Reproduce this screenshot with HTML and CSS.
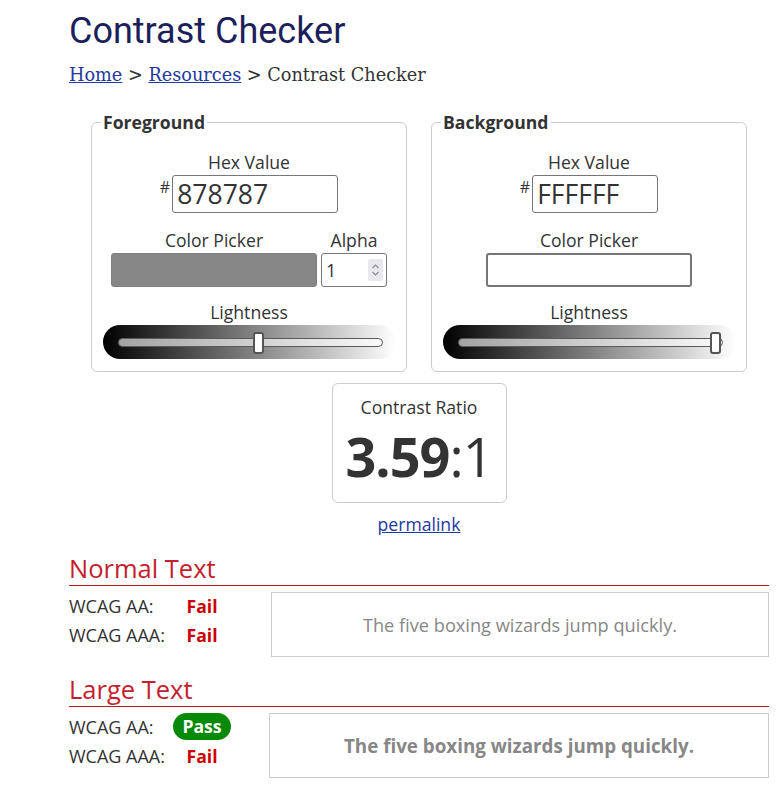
FILE: index.html
```html
<!DOCTYPE html>
<html lang="en">
<head>
<meta charset="utf-8">
<title>Contrast Checker</title>
<link rel="stylesheet" href="styles.css">
</head>
<body>
<main class="page">
  <h1 class="title">Contrast Checker</h1>
  <nav class="crumbs"><a href="#">Home</a> &gt; <a href="#">Resources</a> &gt; Contrast Checker</nav>

  <div class="pickers">
    <fieldset class="panel">
      <legend class="panel-legend">Foreground</legend>
      <div class="panel-body">
        <div class="lbl lbl-first">Hex Value</div>
        <div class="hex-row"><span class="hash">#</span><div class="hex-input hex-fg">878787</div></div>
        <div class="pick-row">
          <div class="pick-col">
            <div class="lbl">Color Picker</div>
            <div class="swatch swatch-fg"></div>
          </div>
          <div class="pick-col">
            <div class="lbl">Alpha</div>
            <div class="alpha"><span class="alpha-val">1</span><span class="spin"><svg width="9" height="14" viewBox="0 0 9 14"><path d="M1.5 5 L4.5 2 L7.5 5" fill="none" stroke="#8a8a90" stroke-width="1.1"/><path d="M1.5 9 L4.5 12 L7.5 9" fill="none" stroke="#8a8a90" stroke-width="1.1"/></svg></span></div>
          </div>
        </div>
        <div class="lbl lbl-light">Lightness</div>
        <div class="slider"><div class="track"><div class="thumb" style="left: 134px"></div></div></div>
      </div>
    </fieldset>

    <fieldset class="panel panel-bg">
      <legend class="panel-legend">Background</legend>
      <div class="panel-body">
        <div class="lbl lbl-first">Hex Value</div>
        <div class="hex-row"><span class="hash">#</span><div class="hex-input hex-bg">FFFFFF</div></div>
        <div class="pick-row">
          <div class="pick-col">
            <div class="lbl">Color Picker</div>
            <div class="swatch swatch-bg"></div>
          </div>
        </div>
        <div class="lbl lbl-light">Lightness</div>
        <div class="slider"><div class="track"><div class="thumb" style="left: 251px"></div></div></div>
      </div>
    </fieldset>
  </div>

  <div class="ratio-wrap">
    <div class="ratio-box">
      <div class="ratio-lbl">Contrast Ratio</div>
      <div class="ratio-val"><b>3.59</b>:1</div>
    </div>
    <a class="permalink" href="#">permalink</a>
  </div>

  <h2 class="sec-title">Normal Text</h2>
  <div class="result">
    <div class="checks">
      <div class="check"><span class="check-lbl">WCAG AA:</span><span class="status fail">Fail</span></div>
      <div class="check"><span class="check-lbl">WCAG AAA:</span><span class="status fail">Fail</span></div>
    </div>
    <div class="sample sample-normal">The five boxing wizards jump quickly.</div>
  </div>

  <h2 class="sec-title">Large Text</h2>
  <div class="result">
    <div class="checks">
      <div class="check"><span class="check-lbl">WCAG AA:</span><span class="status pass">Pass</span></div>
      <div class="check"><span class="check-lbl">WCAG AAA:</span><span class="status fail">Fail</span></div>
    </div>
    <div class="sample sample-large">The five boxing wizards jump quickly.</div>
  </div>
</main>
</body>
</html>
```

FILE: styles.css
```css
* { box-sizing: border-box; }

body {
  margin: 0;
  background: #fff;
  color: #333;
  font-family: "Open Sans", "DejaVu Sans", sans-serif;
  font-size: 17.6px;
}

.page {
  width: 700px;
  margin-left: 69px;
  padding-top: 10px;
}

.title {
  margin: 0;
  font-family: Roboto, "Open Sans", sans-serif;
  font-weight: 400;
  font-size: 36px;
  line-height: 42px;
  color: #1d1f5d;
}

.crumbs {
  margin-top: 11px;
  font-family: "DejaVu Serif", "Liberation Serif", serif;
  font-size: 17.7px;
  line-height: 24px;
  color: #333;
}

.crumbs a { color: #2339a0; }

.pickers {
  display: flex;
  justify-content: center;
  gap: 24px;
  margin-top: 24px;
}

.panel {
  width: 316px;
  min-width: 0;
  margin: 0;
  padding: 0 9px 12px;
  border: 1px solid #ccc;
  border-radius: 6px;
}

.panel-legend {
  padding: 0 2px;
  font-weight: 700;
  font-size: 17.6px;
  line-height: 22px;
  color: #333;
}

.panel-body {
  display: flex;
  flex-direction: column;
  align-items: center;
}

.lbl {
  line-height: 24px;
  margin-bottom: 1px;
  text-align: center;
}

.lbl-first { margin-top: 17px; }
.lbl-light { margin-top: 13px; }

.hex-row {
  display: flex;
  align-items: flex-start;
}

.hash {
  font-size: 16px;
  line-height: 20px;
  margin-top: 2px;
  margin-right: 2px;
}

.hex-input {
  height: 38px;
  padding-left: 4px;
  border: 1px solid #767676;
  border-radius: 3px;
  font-size: 26.5px;
  line-height: 36px;
  color: #333;
}

.hex-fg { width: 166px; }
.hex-bg { width: 126px; }

.pick-row {
  display: flex;
  gap: 4px;
  margin-top: 15px;
}

.pick-col {
  display: flex;
  flex-direction: column;
  align-items: center;
}

.swatch {
  width: 206px;
  height: 34px;
  border-radius: 3px;
}

.swatch-fg {
  background: #878787;
  border: 1px solid #808080;
}

.swatch-bg {
  background: #fff;
  border: 2px solid #767676;
}

.alpha {
  width: 66px;
  height: 34px;
  display: flex;
  align-items: center;
  justify-content: space-between;
  padding: 0 3px 0 4px;
  border: 1px solid #767676;
  border-radius: 3px;
  font-size: 18px;
}

.spin {
  width: 15px;
  height: 22px;
  display: flex;
  align-items: center;
  justify-content: center;
  background: #e9e9ed;
  border-radius: 2px;
}

.slider {
  width: 293px;
  height: 34px;
  padding: 13px 13px 0 15px;
  border-radius: 17px;
  background: linear-gradient(to right, #000 0%, #fff 100%);
}

.track {
  position: relative;
  height: 9px;
  border: 1px solid #5a5a5a;
  border-radius: 5px;
  background: rgba(255, 255, 255, 0.62);
}

.thumb {
  position: absolute;
  top: -7px;
  width: 11px;
  height: 22px;
  background: #fff;
  border: 2px solid #555;
  border-radius: 3px;
}

.ratio-wrap {
  display: flex;
  flex-direction: column;
  align-items: center;
  margin-top: 11px;
}

.ratio-box {
  width: 175px;
  height: 120px;
  padding-top: 11px;
  border: 1px solid #ccc;
  border-radius: 6px;
  text-align: center;
}

.ratio-lbl {
  line-height: 24px;
}

.ratio-val {
  margin-top: 5px;
  font-size: 54px;
  line-height: 64px;
  letter-spacing: -1px;
  color: #333;
}

.ratio-val b { font-weight: 700; }

.permalink {
  margin-top: 9px;
  line-height: 24px;
  color: #2339a0;
}

.sec-title {
  margin: 15px 0 0;
  font-size: 25.5px;
  font-weight: 400;
  line-height: 34px;
  color: #c41e2f;
  border-bottom: 1px solid #b51f24;
}

.result {
  display: flex;
  align-items: flex-start;
  margin-top: 5px;
}

.checks {
  width: 162px;
  flex: none;
}

.check {
  display: flex;
  align-items: center;
  height: 29px;
}

.check-lbl {
  width: 104px;
  font-size: 18px;
}

.status {
  width: 58px;
  text-align: center;
  font-weight: 700;
  font-size: 17.6px;
}

.fail { color: #c00; }

.pass {
  height: 27px;
  line-height: 27px;
  border-radius: 14px;
  background: #088a08;
  color: #fff;
}

.sample {
  flex: 1;
  height: 65px;
  margin-top: 1px;
  margin-left: 40px;
  display: flex;
  align-items: center;
  justify-content: center;
  border: 1px solid #ccc;
  color: #878787;
}

.sample-normal { font-size: 18.2px; }

.sample-large {
  margin-left: 38px;
  font-size: 18.8px;
  font-weight: 700;
}
```
